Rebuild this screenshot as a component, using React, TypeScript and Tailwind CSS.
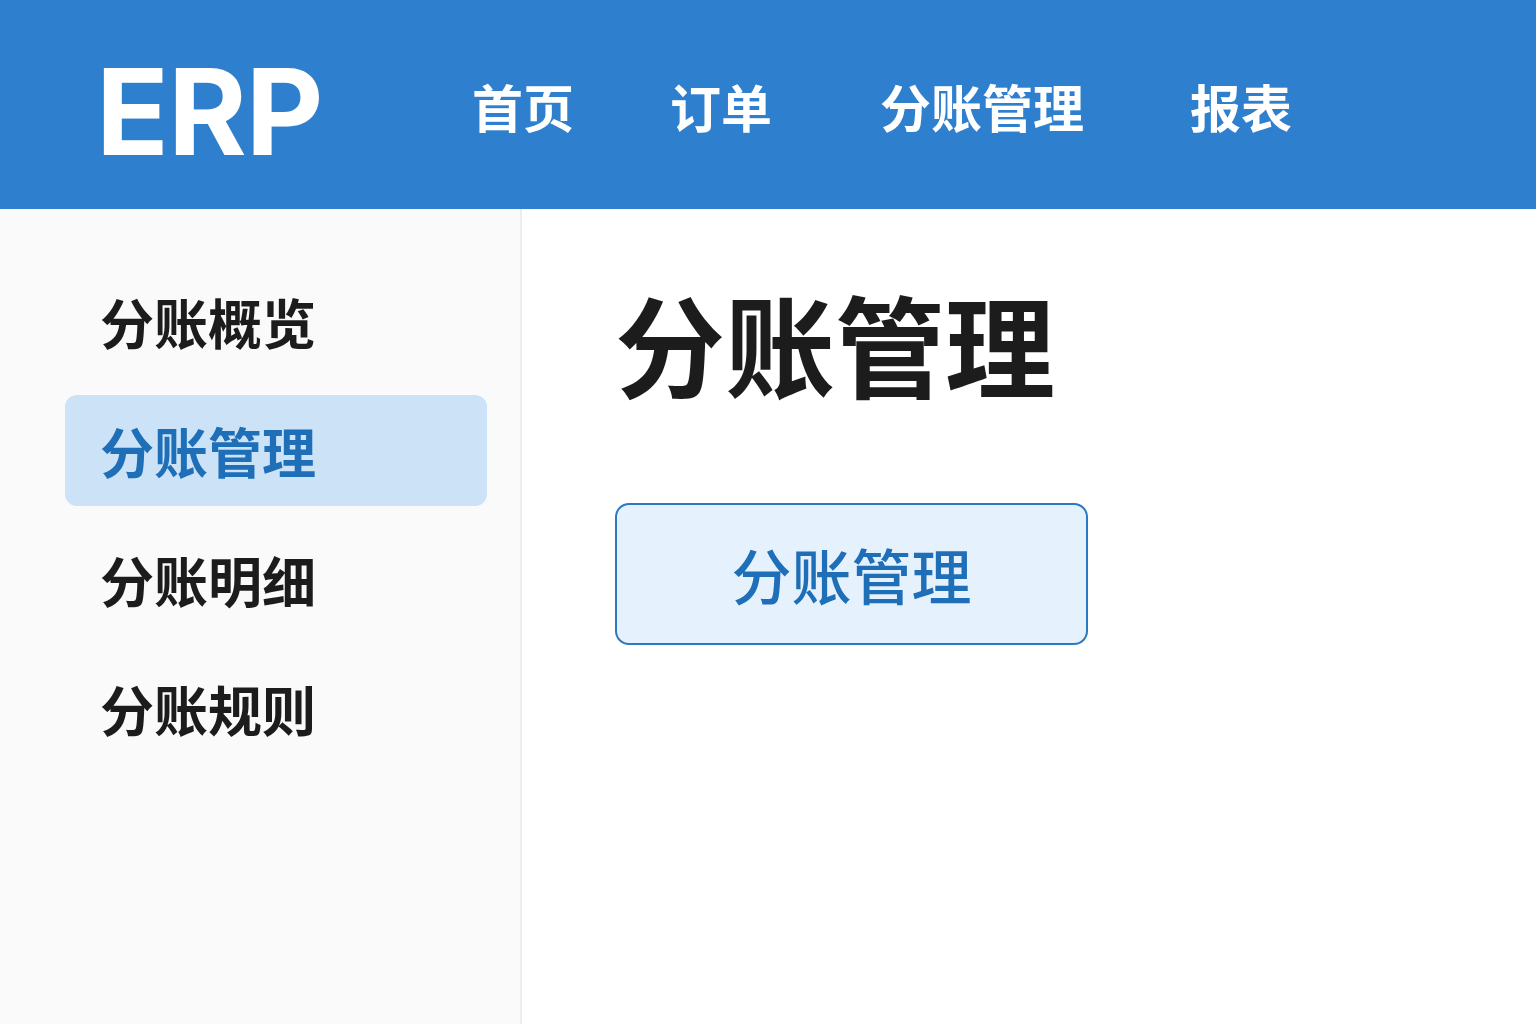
import React from 'react';

const NAV = [
  { label: '首页', cls: 'ml-0' },
  { label: '订单', cls: 'ml-[96px]' },
  { label: '分账管理', cls: 'ml-[108px]' },
  { label: '报表', cls: 'ml-[106px]' },
];
const SIDE = ['分账概览', '分账管理', '分账明细', '分账规则'];

const FONT = { fontFamily: '"Noto Sans CJK SC", "Noto Sans", sans-serif' };

export default function App(): React.ReactElement {
  return (
    <div className="w-[1536px] h-[1024px] overflow-hidden flex flex-col bg-white" style={FONT}>
      <header className="h-[209px] shrink-0 bg-[#2e7fce] flex items-center pl-[96px]">
        <div className="w-[376px] text-white text-[120px] font-bold leading-none tracking-[-1px] font-['Inter',sans-serif] mt-[14px]">
          ERP
        </div>
        <nav className="flex items-center mt-[4px]">
          {NAV.map((n) => (
            <span key={n.label} className={`${n.cls} text-white text-[51px] font-bold leading-none`}>
              {n.label}
            </span>
          ))}
        </nav>
      </header>

      <div className="flex flex-1">
        <aside className="w-[522px] shrink-0 bg-[#fafafa] border-r-2 border-[#ededed] pl-[65px] pr-[33px] pt-[57px]">
          <div className="flex flex-col gap-[18px]">
            {SIDE.map((s, i) => (
              <div
                key={s}
                className={
                  i === 1
                    ? 'h-[111px] rounded-[12px] bg-[#cbe2f7] pl-[35px] flex items-center text-[54px] font-bold text-[#1f6fb8] leading-none'
                    : 'h-[111px] rounded-[12px] pl-[35px] flex items-center text-[54px] font-bold text-[#1c1c1c] leading-none'
                }
              >
                {s}
              </div>
            ))}
          </div>
        </aside>

        <main className="flex-1 pl-[93px] pt-[78px]">
          <h1 className="text-[110px] font-bold text-[#1c1c1c] leading-none">分账管理</h1>
          <button className="mt-[106px] w-[473px] h-[142px] rounded-[14px] border-2 border-[#2a79c5] bg-[#e5f1fd] text-[60px] font-medium text-[#1f6fb8] leading-none flex items-center justify-center">
            分账管理
          </button>
        </main>
      </div>
    </div>
  );
}
